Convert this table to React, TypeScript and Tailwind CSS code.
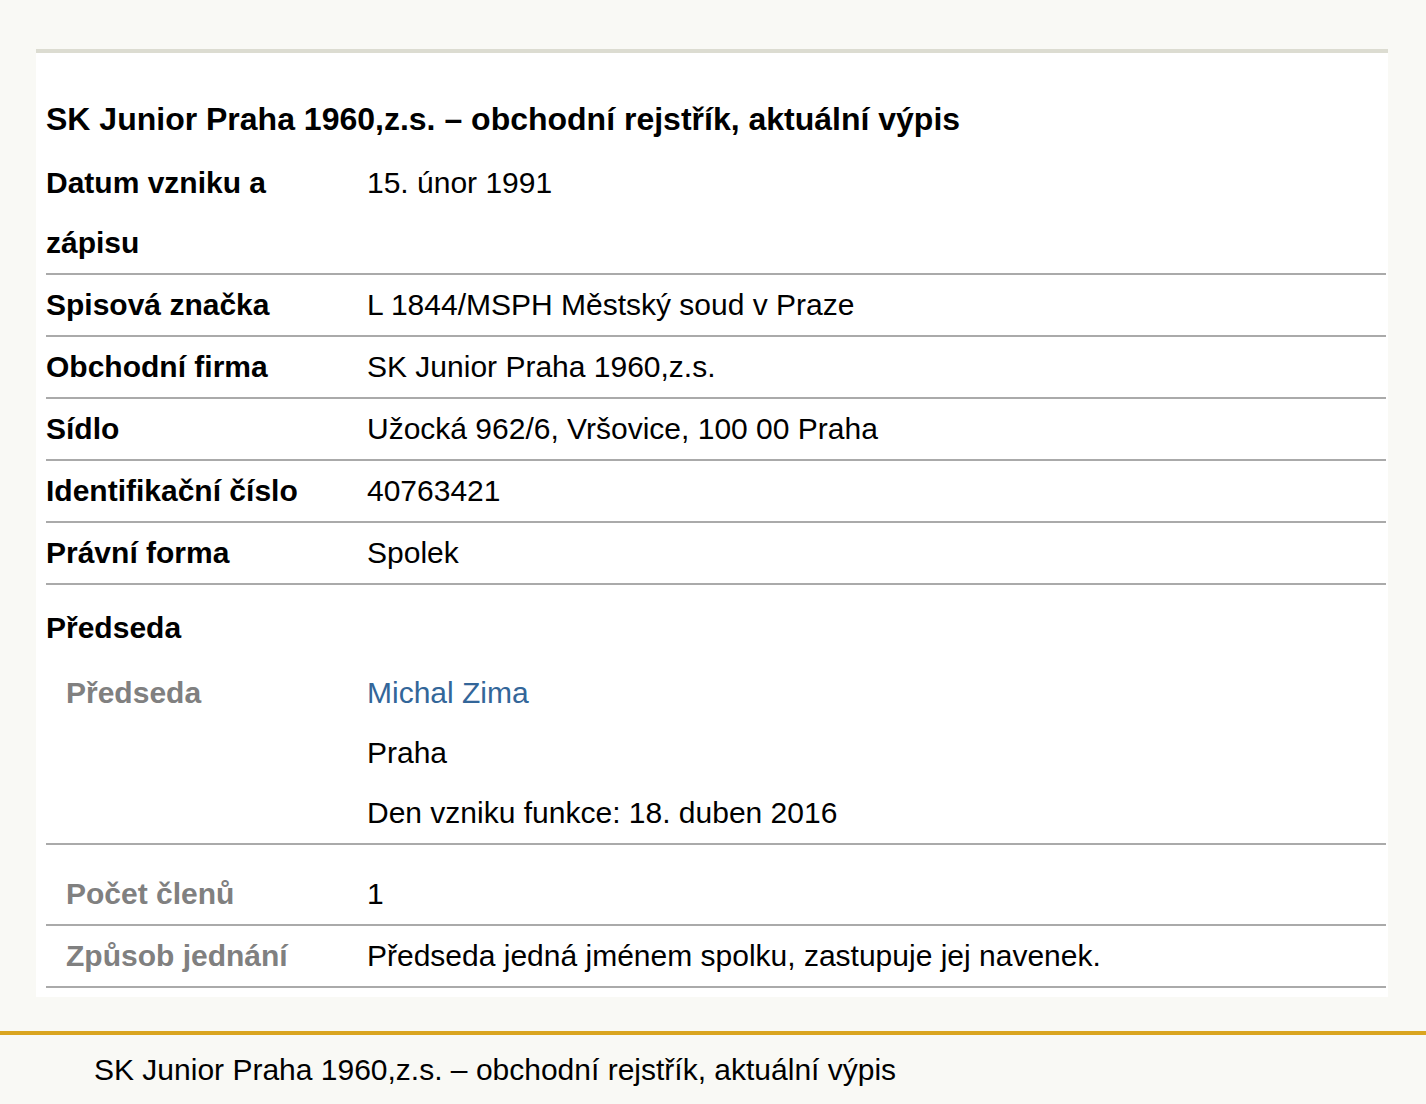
const rows: Array<{ label: string; lines: string[] }> = [
  { label: "Spisová značka", lines: ["L 1844/MSPH Městský soud v Praze"] },
  { label: "Obchodní firma", lines: ["SK Junior Praha 1960,z.s."] },
  { label: "Sídlo", lines: ["Užocká 962/6, Vršovice, 100 00 Praha"] },
  { label: "Identifikační číslo", lines: ["40763421"] },
  { label: "Právní forma", lines: ["Spolek"] },
]

export default function App() {
  return (
    <div
      className="min-h-[1104px] bg-[#f9f9f5] text-[30px] leading-[60px] text-black"
      style={{ fontFamily: '"Liberation Sans", Arial, sans-serif' }}
    >
      <div className="pt-[49px] pb-[34px] pl-[36px] pr-[38px]">
        <div className="border-t-4 border-[#dcdcd1] bg-white pl-[10px] pr-[2px] pt-[36px] pb-[9px]">
          <h1 className="mb-[4px] text-[32px] font-bold">
            SK Junior Praha 1960,z.s. – obchodní rejstřík, aktuální výpis
          </h1>

          <div className="flex border-b-2 border-[#aaaaaa]">
            <div className="w-[321px] shrink-0 pr-[60px] font-bold">Datum vzniku a zápisu</div>
            <div className="flex-1">15. únor 1991</div>
          </div>

          {rows.map((row) => (
            <div key={row.label} className="flex border-b-2 border-[#aaaaaa]">
              <div className="w-[321px] shrink-0 font-bold">{row.label}</div>
              <div className="flex-1">
                {row.lines.map((line) => (
                  <div key={line}>{line}</div>
                ))}
              </div>
            </div>
          ))}

          <h2 className="pt-[13px] pb-[5px] font-bold">Předseda</h2>

          <div className="flex border-b-2 border-[#aaaaaa]">
            <div className="w-[321px] shrink-0 pl-[20px] font-bold text-[#808080]">Předseda</div>
            <div className="flex-1">
              <div className="text-[#336699]">Michal Zima</div>
              <div>Praha</div>
              <div>Den vzniku funkce: 18. duben 2016</div>
            </div>
          </div>

          <div className="flex border-b-2 border-[#aaaaaa] pt-[19px]">
            <div className="w-[321px] shrink-0 pl-[20px] font-bold text-[#808080]">Počet členů</div>
            <div className="flex-1">1</div>
          </div>

          <div className="flex border-b-2 border-[#aaaaaa]">
            <div className="w-[321px] shrink-0 pl-[20px] font-bold text-[#808080]">Způsob jednání</div>
            <div className="flex-1">Předseda jedná jménem spolku, zastupuje jej navenek.</div>
          </div>
        </div>
      </div>

      <footer className="border-t-4 border-[#daa520] pt-[5px] pl-[94px]">
        SK Junior Praha 1960,z.s. – obchodní rejstřík, aktuální výpis
      </footer>
    </div>
  )
}
